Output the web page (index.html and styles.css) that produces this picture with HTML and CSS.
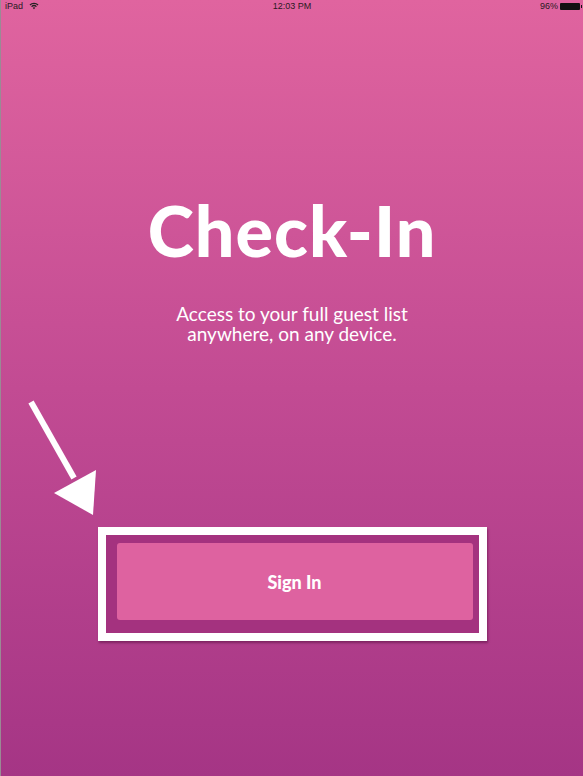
FILE: index.html
```html
<html>
	<head>
		<meta charset="UTF-8" />
		<meta name="viewport" content="width=device-width, initial-scale=1.0" />
		<title>Check-In</title>
		<link rel="stylesheet" href="styles.css">
	</head>
	<body>
		<div class="screen">
			<div class="statusbar">
				<div class="status-left">
					<span>iPad</span>
					<svg class="wifi" width="10" height="8" viewBox="0 0 10 8">
						<path d="M0.5 2.6 A6.5 6.5 0 0 1 9.5 2.6 L8.6 3.5 A5.2 5.2 0 0 0 1.4 3.5 Z" fill="#222" />
						<path d="M2.1 4.2 A4.2 4.2 0 0 1 7.9 4.2 L7 5.1 A2.9 2.9 0 0 0 3 5.1 Z" fill="#222" />
						<path d="M3.7 5.8 A1.9 1.9 0 0 1 6.3 5.8 L5 7.2 Z" fill="#222" />
					</svg>
				</div>
				<div class="status-time">12:03 PM</div>
				<div class="status-right">
					<span>96%</span>
					<div class="battery"></div>
				</div>
			</div>

			<div class="content">
				<h1 class="title">Check-In</h1>
				<p class="tagline">Access to your full guest list<br />anywhere, on any device.</p>

				<div class="highlight">
					<button type="button" class="signin">Sign In</button>
				</div>
			</div>

			<!-- annotation arrow -->
			<svg class="arrow" width="100" height="140" viewBox="0 0 100 140">
				<line x1="30" y1="22" x2="73" y2="98" stroke="#fff" stroke-width="6" />
				<polygon points="53,113 95,90 92,135" fill="#fff" />
			</svg>
		</div>
	</body>
</html>
```

FILE: styles.css
```css
body {
	margin: 0;
	font-family: Lato, "Noto Sans", sans-serif;
}
.screen {
	position: relative;
	width: 583px;
	height: 776px;
	overflow: hidden;
	box-sizing: border-box;
	border-left: 1px solid #9a8a94;
	background: linear-gradient(to bottom, #e0649f 0%, #c24b93 50%, #a53585 100%);
	display: flex;
	flex-direction: column;
}
.statusbar {
	height: 12px;
	display: flex;
	align-items: center;
	justify-content: space-between;
	padding: 0 3px 0 4px;
	font-family: "Liberation Sans", sans-serif;
	font-size: 9px;
	color: #2a1a22;
	position: relative;
}
.status-left {
	display: flex;
	align-items: center;
	gap: 6px;
}
.status-time {
	position: absolute;
	left: 0;
	right: 0;
	text-align: center;
	top: 0;
	line-height: 12px;
}
.status-right {
	display: flex;
	align-items: center;
	gap: 2px;
}
.battery {
	width: 20px;
	height: 7px;
	background: #111;
	border-radius: 1px;
	position: relative;
}
.battery::after {
	content: "";
	position: absolute;
	right: -2px;
	top: 2px;
	width: 1px;
	height: 3px;
	background: #111;
}
.content {
	display: flex;
	flex-direction: column;
	align-items: center;
	color: #fff;
}
.title {
	margin: 178px 0 0;
	font-size: 70px;
	font-weight: 900;
	line-height: 80px;
	letter-spacing: 1px;
}
.tagline {
	margin: 34px 0 0;
	font-size: 19px;
	line-height: 20px;
	text-align: center;
}
.highlight {
	margin: 183px 0 0;
	width: 389px;
	height: 114px;
	box-sizing: border-box;
	border: 8px solid #fff;
	background: #a4327f;
	box-shadow: 1px 2px 2px rgba(80, 10, 60, 0.5);
	padding: 8px 6px 13px 11px;
}
.signin {
	display: block;
	width: 100%;
	height: 100%;
	border: none;
	border-radius: 3px;
	background: #de62a0;
	color: #fff;
	font-family: Lato, sans-serif;
	font-weight: 900;
	font-size: 18px;
}
.arrow {
	position: absolute;
	left: 0;
	top: 380px;
}
```
